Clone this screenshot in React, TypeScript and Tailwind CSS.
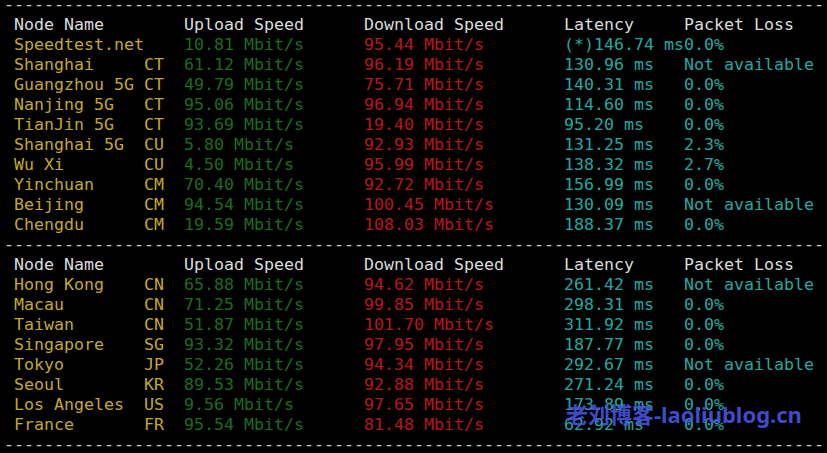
import React from "react";

type Row = { name: string; code: string; up: string; down: string; lat: string; loss: string };

const t1: Row[] = [
  { name: "Speedtest.net", code: "", up: "10.81 Mbit/s", down: "95.44 Mbit/s", lat: "(*)146.74 ms", loss: "0.0%" },
  { name: "Shanghai", code: "CT", up: "61.12 Mbit/s", down: "96.19 Mbit/s", lat: "130.96 ms", loss: "Not available" },
  { name: "Guangzhou 5G", code: "CT", up: "49.79 Mbit/s", down: "75.71 Mbit/s", lat: "140.31 ms", loss: "0.0%" },
  { name: "Nanjing 5G", code: "CT", up: "95.06 Mbit/s", down: "96.94 Mbit/s", lat: "114.60 ms", loss: "0.0%" },
  { name: "TianJin 5G", code: "CT", up: "93.69 Mbit/s", down: "19.40 Mbit/s", lat: "95.20 ms", loss: "0.0%" },
  { name: "Shanghai 5G", code: "CU", up: "5.80 Mbit/s", down: "92.93 Mbit/s", lat: "131.25 ms", loss: "2.3%" },
  { name: "Wu Xi", code: "CU", up: "4.50 Mbit/s", down: "95.99 Mbit/s", lat: "138.32 ms", loss: "2.7%" },
  { name: "Yinchuan", code: "CM", up: "70.40 Mbit/s", down: "92.72 Mbit/s", lat: "156.99 ms", loss: "0.0%" },
  { name: "Beijing", code: "CM", up: "94.54 Mbit/s", down: "100.45 Mbit/s", lat: "130.09 ms", loss: "Not available" },
  { name: "Chengdu", code: "CM", up: "19.59 Mbit/s", down: "108.03 Mbit/s", lat: "188.37 ms", loss: "0.0%" },
];

const t2: Row[] = [
  { name: "Hong Kong", code: "CN", up: "65.88 Mbit/s", down: "94.62 Mbit/s", lat: "261.42 ms", loss: "Not available" },
  { name: "Macau", code: "CN", up: "71.25 Mbit/s", down: "99.85 Mbit/s", lat: "298.31 ms", loss: "0.0%" },
  { name: "Taiwan", code: "CN", up: "51.87 Mbit/s", down: "101.70 Mbit/s", lat: "311.92 ms", loss: "0.0%" },
  { name: "Singapore", code: "SG", up: "93.32 Mbit/s", down: "97.95 Mbit/s", lat: "187.77 ms", loss: "0.0%" },
  { name: "Tokyo", code: "JP", up: "52.26 Mbit/s", down: "94.34 Mbit/s", lat: "292.67 ms", loss: "Not available" },
  { name: "Seoul", code: "KR", up: "89.53 Mbit/s", down: "92.88 Mbit/s", lat: "271.24 ms", loss: "0.0%" },
  { name: "Los Angeles", code: "US", up: "9.56 Mbit/s", down: "97.65 Mbit/s", lat: "173.89 ms", loss: "0.0%" },
  { name: "France", code: "FR", up: "95.54 Mbit/s", down: "81.48 Mbit/s", lat: "62.92 ms", loss: "0.0%" },
];

const dashes = "-".repeat(82);

function Dash() {
  return <div className="text-[#d4d4d4]">{dashes}</div>;
}

function Header() {
  return (
    <div className="text-[#dcdcdc]">
      {" " + "Node Name".padEnd(17) + "Upload Speed".padEnd(18) + "Download Speed".padEnd(20) + "Latency".padEnd(12) + "Packet Loss"}
    </div>
  );
}

function DataRow({ r }: { r: Row }) {
  return (
    <div>
      <span className="text-[#c4a82c]">{" " + r.name.padEnd(13) + r.code.padEnd(4)}</span>
      <span className="text-[#1d6c1f]">{r.up.padEnd(18)}</span>
      <span className="text-[#ba161c]">{r.down.padEnd(20)}</span>
      <span className="text-[#25a8a2]">{r.lat.padEnd(12) + r.loss}</span>
    </div>
  );
}

export default function App() {
  return (
    <div className="relative w-[827px] h-[453px] overflow-hidden bg-black">
      <div
        className="mt-[-5px] pl-[4px] whitespace-pre text-[16.61px] leading-[20px]"
        style={{ fontFamily: '"DejaVu Sans Mono", "Liberation Mono", monospace' }}
      >
        <Dash />
        <Header />
        {t1.map((r) => (
          <DataRow key={r.name} r={r} />
        ))}
        <Dash />
        <Header />
        {t2.map((r) => (
          <DataRow key={r.name} r={r} />
        ))}
        <Dash />
      </div>
      <div
        className="absolute left-[566px] top-[400px] whitespace-nowrap text-[22px] leading-[28px] font-bold text-[#4a56e4]/90"
        style={{ fontFamily: '"Noto Sans", "Noto Sans CJK SC", sans-serif' }}
      >
        老刘博客-laoliublog.cn
      </div>
    </div>
  );
}
